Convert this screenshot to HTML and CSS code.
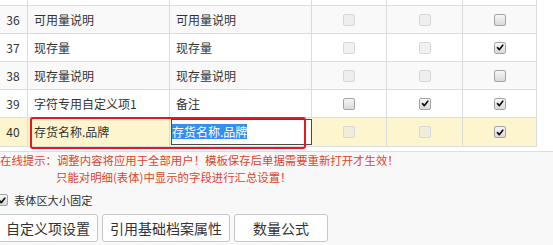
FILE: index.html
```html
<!DOCTYPE html>
<html lang="zh">
<head>
<meta charset="utf-8">
<link rel="stylesheet" href="styles.css">
</head>
<body>
<div class="page">
  <div class="grid-area">
    <div class="grid">
      <div class="row partial">
        <div class="c num"></div><div class="c"></div><div class="c"></div><div class="c"></div><div class="c"></div><div class="c"></div>
      </div>
      <div class="row alt">
        <div class="c num">36</div><div class="c txt">可用量说明</div><div class="c txt">可用量说明</div>
        <div class="c chk"><span class="cb dis"></span></div>
        <div class="c chk"><span class="cb dis"></span></div>
        <div class="c chk"><span class="cb"></span></div>
      </div>
      <div class="row">
        <div class="c num">37</div><div class="c txt">现存量</div><div class="c txt">现存量</div>
        <div class="c chk"><span class="cb dis"></span></div>
        <div class="c chk"><span class="cb dis"></span></div>
        <div class="c chk"><span class="cb on"><svg viewBox="0 0 12 12"><path d="M3 6.2 L5.1 8.6 L9.3 3.2" /></svg></span></div>
      </div>
      <div class="row alt">
        <div class="c num">38</div><div class="c txt">现存量说明</div><div class="c txt">现存量说明</div>
        <div class="c chk"><span class="cb dis"></span></div>
        <div class="c chk"><span class="cb dis"></span></div>
        <div class="c chk"><span class="cb"></span></div>
      </div>
      <div class="row">
        <div class="c num">39</div><div class="c txt">字符专用自定义项1</div><div class="c txt">备注</div>
        <div class="c chk"><span class="cb"></span></div>
        <div class="c chk"><span class="cb on"><svg viewBox="0 0 12 12"><path d="M3 6.2 L5.1 8.6 L9.3 3.2" /></svg></span></div>
        <div class="c chk"><span class="cb on"><svg viewBox="0 0 12 12"><path d="M3 6.2 L5.1 8.6 L9.3 3.2" /></svg></span></div>
      </div>
      <div class="row sel">
        <div class="c num">40</div><div class="c txt">存货名称.品牌</div>
        <div class="c edit"><div class="editor"><span class="hl">存货名称.品牌</span></div></div>
        <div class="c chk"><span class="cb dis"></span></div>
        <div class="c chk"><span class="cb dis"></span></div>
        <div class="c chk"><span class="cb on"><svg viewBox="0 0 12 12"><path d="M3 6.2 L5.1 8.6 L9.3 3.2" /></svg></span></div>
      </div>
    </div>
    <div class="mark"></div>
  </div>
  <div class="panel">
    <div class="tip">在线提示：调整内容将应用于全部用户！模板保存后单据需要重新打开才生效！</div>
    <div class="tip second">只能对明细(表体)中显示的字段进行汇总设置！</div>
    <label class="fixed"><span class="cb on"><svg viewBox="0 0 12 12"><path d="M3 6.2 L5.1 8.6 L9.3 3.2" /></svg></span><span>表体区大小固定</span></label>
    <div class="buttons">
      <button class="btn first">自定义项设置</button>
      <button class="btn">引用基础档案属性</button>
      <button class="btn wide">数量公式</button>
    </div>
  </div>
</div>
</body>
</html>
```
FILE: styles.css
```css
* { box-sizing: border-box; }
html, body { margin: 0; padding: 0; background: #fff; }
body {
  font-family: "Noto Sans CJK SC", "Noto Sans", sans-serif;
  font-size: 12px;
  color: #333;
  width: 553px;
  height: 245px;
  overflow: hidden;
}
.page { width: 553px; }
.grid-area {
  position: relative;
  height: 151px;
  background: #fff;
}
.grid { width: 537px; }
.row {
  display: grid;
  grid-template-columns: 28px 142px 142px 75px 76px 74px;
  height: 28px;
  border-bottom: 1px solid #dcdcdc;
  background: #fff;
}
.row.partial { height: 6px; }
.row.alt { background: #f9f9f9; }
.row.sel { background: #fdf5cd; height: 29px; }
.c {
  border-right: 1px solid #dcdcdc;
  display: flex;
  align-items: center;
  line-height: 16px;
  white-space: nowrap;
}
.num { justify-content: center; padding-right: 1px; }
.txt { padding-left: 6px; }
.chk { justify-content: center; }
.edit { border-right: none; padding: 1px 0 1px 1px; align-items: stretch; }
.editor {
  flex: 1;
  background: #fff;
  border: 1px solid #4a4a4a;
  display: flex;
  align-items: center;
  padding-bottom: 1px;
}
.hl { background: #3390f0; color: #fff; line-height: 15px; }
.cb {
  width: 12px;
  height: 12px;
  border: 1px solid #a4a4a4;
  border-radius: 2px;
  background: linear-gradient(#f6f6f6, #dadada);
  display: inline-flex;
  align-items: center;
  justify-content: center;
}
.cb.dis {
  border-color: #d8d8d8;
  background: rgba(230, 230, 230, 0.55);
}
.cb svg { width: 11px; height: 11px; }
.cb path { fill: none; stroke: #111; stroke-width: 2; stroke-linecap: round; stroke-linejoin: round; }
.mark {
  position: absolute;
  left: 30px;
  top: 117px;
  width: 276px;
  height: 32px;
  border: 2px solid #e8161e;
  border-radius: 3px;
}
.panel {
  height: 94px;
  background: #f8f8f8;
  border-top: 1px solid #dedede;
}
.tip {
  color: #e0452a;
  font-size: 11.4px;
  line-height: 17px;
  white-space: nowrap;
}
.tip.second { padding-left: 56px; }
.fixed {
  display: flex;
  align-items: center;
  gap: 6px;
  height: 18px;
  margin-top: 5px;
  margin-left: -4px;
  font-size: 11.2px;
  color: #333;
}
.buttons {
  display: flex;
  gap: 4px;
  margin-top: 5px;
  margin-left: -2px;
}
.btn {
  font-family: "Noto Sans CJK SC", "Noto Sans", sans-serif;
  font-size: 14px;
  color: #333;
  background: #fff;
  border: 1px solid #c6c6c6;
  border-radius: 3px;
  height: 28px;
  padding: 0 7px;
  line-height: 26px;
}
.btn.wide { width: 94px; }
```
